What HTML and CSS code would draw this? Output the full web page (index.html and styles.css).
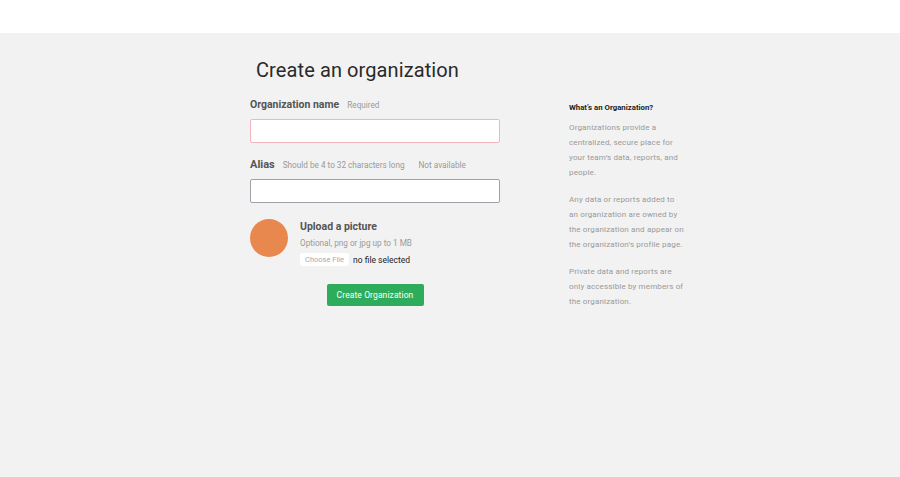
FILE: index.html
```html
<!DOCTYPE html>
<html>
<head>
<meta charset="utf-8">
<link rel="stylesheet" href="styles.css">
</head>
<body>
<header class="topbar"></header>
<main class="page">
  <div class="layout">
    <section class="form-col">
      <h1 class="title">Create an organization</h1>
      <div class="field">
        <div class="label-row"><span class="label">Organization name</span><span class="hint">Required</span></div>
        <input class="input input-error" type="text">
      </div>
      <div class="field field-alias">
        <div class="label-row"><span class="label label-lg">Alias</span><span class="hint">Should be 4 to 32 characters long</span><span class="hint hint-far">Not available</span></div>
        <input class="input" type="text">
      </div>
      <div class="upload">
        <div class="avatar"></div>
        <div class="upload-info">
          <div class="upload-title">Upload a picture</div>
          <div class="upload-hint">Optional, png or jpg up to 1 MB</div>
          <div class="file-row"><span class="file-btn">Choose File</span><span class="file-name">no file selected</span></div>
        </div>
      </div>
      <div class="actions"><button class="btn">Create Organization</button></div>
    </section>
    <aside class="side">
      <h2 class="side-title">What’s an Organization?</h2>
      <p>Organizations provide a centralized, secure place for your team’s data, reports, and people.</p>
      <p>Any data or reports added to an organization are owned by the organization and appear on the organization’s profile page.</p>
      <p>Private data and reports are only accessible by members of the organization.</p>
    </aside>
  </div>
</main>
</body>
</html>
```
FILE: styles.css
```css
* { box-sizing: border-box; }
html, body { margin: 0; height: 100%; }
body {
  font-family: Roboto, "Liberation Sans", sans-serif;
  background: #f2f2f2;
  color: #555;
}
.topbar { height: 33px; background: #fff; }
.page { background: #f2f2f2; }
.layout {
  display: flex;
  padding-left: 250px;
  padding-top: 22px;
}
.form-col { width: 250px; }
.title {
  margin: 0 0 0 6px;
  font-size: 20px;
  font-weight: 400;
  color: #2a2a2a;
  line-height: 30px;
  letter-spacing: 0.1px;
}
.field { margin-top: 13px; }
.field-alias { margin-top: 15px; }
.label-row { display: flex; align-items: baseline; height: 16px; }
.label { font-size: 10.5px; font-weight: 700; color: #555; }
.label-lg { font-size: 11px; }
.hint { font-size: 8.2px; color: #999; margin-left: 8px; }
.label-lg + .hint { margin-left: 8px; }
.hint-far { margin-left: 14px; }
.input {
  display: block;
  width: 250px;
  height: 24px;
  margin-top: 5px;
  border: 1px solid #9da1a8;
  border-radius: 2px;
  background: #fff;
  outline: none;
}
.input-error { border-color: #efb6bd; }
.upload { display: flex; margin-top: 16px; }
.avatar {
  width: 38px; height: 38px; border-radius: 50%;
  background: #e8874e;
  flex: none;
}
.upload-info { margin-left: 12px; margin-top: 1px; }
.upload-title { font-size: 10.5px; font-weight: 700; color: #555; line-height: 13px; }
.upload-hint { font-size: 8.2px; color: #9a9a9a; margin-top: 5px; line-height: 10px; }
.file-row { display: flex; align-items: center; margin-top: 5px; }
.file-btn {
  background: #fff; color: #aaa; font-size: 7.5px;
  padding: 2px 5px; border-radius: 3px; line-height: 9px;
}
.file-name { font-size: 8.5px; color: #222; margin-left: 4px; }
.actions { display: flex; justify-content: center; margin-top: 18px; }
.btn {
  font-family: inherit;
  background: #2dac5c; color: #fff; border: none;
  border-radius: 2px; font-size: 8.5px;
  width: 97px; height: 22px; padding: 0;
  letter-spacing: 0.1px;
}
.side { width: 116px; margin-left: 69px; margin-top: 46px; }
.side-title { margin: 0 0 5px; font-size: 7.8px; font-weight: 700; color: #222; line-height: 14px; }
.side p { margin: 0 0 12px; font-size: 8px; line-height: 15px; color: #999; letter-spacing: 0.15px; }
```
